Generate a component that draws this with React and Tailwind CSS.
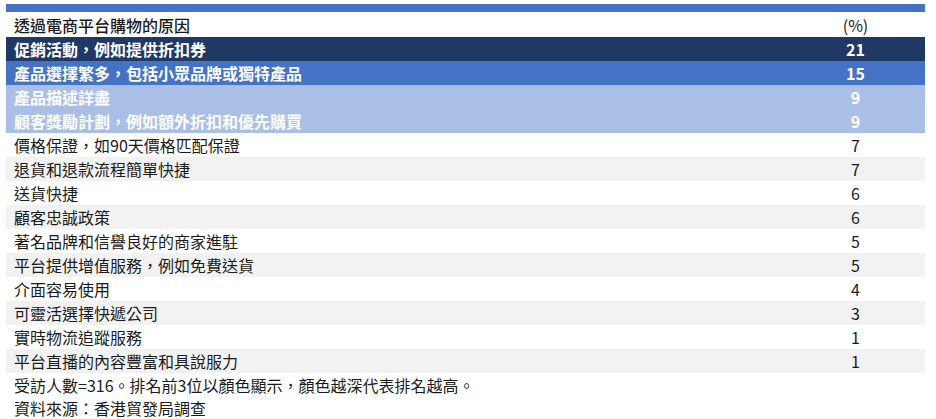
import React from 'react';

const rows = [
  { label: '促銷活動，例如提供折扣券', value: 21, tone: 'dark' },
  { label: '產品選擇繁多，包括小眾品牌或獨特產品', value: 15, tone: 'mid' },
  { label: '產品描述詳盡', value: 9, tone: 'light' },
  { label: '顧客獎勵計劃，例如額外折扣和優先購買', value: 9, tone: 'light' },
  { label: '價格保證，如90天價格匹配保證', value: 7 },
  { label: '退貨和退款流程簡單快捷', value: 7 },
  { label: '送貨快捷', value: 6 },
  { label: '顧客忠誠政策', value: 6 },
  { label: '著名品牌和信譽良好的商家進駐', value: 5 },
  { label: '平台提供增值服務，例如免費送貨', value: 5 },
  { label: '介面容易使用', value: 4 },
  { label: '可靈活選擇快遞公司', value: 3 },
  { label: '實時物流追蹤服務', value: 1 },
  { label: '平台直播的內容豐富和具說服力', value: 1 },
];

function rowClass(row, i) {
  if (row.tone === 'dark') return 'bg-[#1f3864] text-white font-bold';
  if (row.tone === 'mid') return 'bg-[#4472c4] text-white font-bold';
  if (row.tone === 'light') return 'bg-[#a9bfe6] text-white font-bold';
  // plain rows alternate white / light gray
  return i % 2 === 0 ? 'bg-white text-[#1a1a1a]' : 'bg-[#f2f2f2] text-[#1a1a1a]';
}

export default function App() {
  return (
    <div className="w-[936px] h-[419px] bg-white pt-1 pl-[6px] font-['Noto_Sans_CJK_TC','Noto_Sans',sans-serif] text-[16px] leading-none">
      <div className="w-[919px]">
        {/* blue strip above the header */}
        <div className="h-2 bg-[#4472c4]" />

        {/* header */}
        <div className="flex h-[25px] items-center text-[#1a1a1a]">
          <div className="flex-1 pl-2 font-medium">透過電商平台購物的原因</div>
          <div className="w-[139px] text-center">(%)</div>
        </div>

        {rows.map((row, i) => (
          <div key={row.label} className={`flex h-6 items-center ${rowClass(row, i)}`}>
            <div className="flex-1 pl-2">{row.label}</div>
            <div className="w-[139px] text-center">{row.value}</div>
          </div>
        ))}

        {/* notes */}
        <div className="h-6 flex items-center text-[#1a1a1a] pl-2">
          受訪人數=316。排名前3位以顏色顯示，顏色越深代表排名越高。
        </div>
        <div className="h-[22px] flex items-center text-[#1a1a1a] pl-2">
          資料來源：香港貿發局調查
        </div>
      </div>
    </div>
  );
}
